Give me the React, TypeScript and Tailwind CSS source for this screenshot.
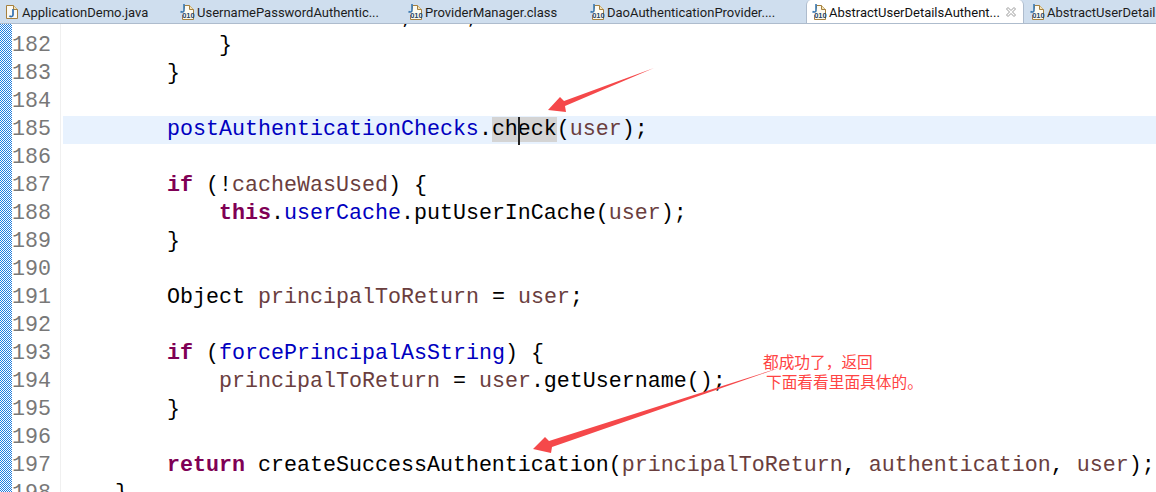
import type { ReactNode } from "react";

function ClassIcon() {
    return (
        <svg width="17" height="18" viewBox="0 0 17 18" className="shrink-0">
            <path d="M5.5 5.5V2.5h5l4 4v10h-11V12" fill="#fdfaf0" stroke="#a5803f" />
            <path d="M10.5 2.5v4h4" fill="#f3e4b8" stroke="#a5803f" />
            <path d="M5 1v6.5c0 1.5-2 2-3.5 1" fill="none" stroke="#3a78b0" strokeWidth="1.6" />
            <text x="3.2" y="15" fontSize="7.5" fontWeight="700" fontFamily="Liberation Sans, sans-serif" fill="#27466b">
                010
            </text>
        </svg>
    );
}

function JavaIcon() {
    return (
        <svg width="14" height="16" viewBox="0 0 14 16" className="shrink-0">
            <path d="M1.5 1.5h7l4 4v9h-11z" fill="#fbf9f2" stroke="#a5803f" />
            <path d="M8.5 1.5v4h4" fill="#f3e4b8" stroke="#a5803f" />
            <path d="M8 5v6c0 1.8-2.6 2-3.6.8" fill="none" stroke="#2f6fb0" strokeWidth="1.7" />
        </svg>
    );
}

function Tab({ name, w, java, active }: { name: string; w: string; java?: boolean; active?: boolean }) {
    return (
        <div
            className={
                active
                    ? `${w} h-6 shrink-0 flex items-center gap-[1px] pl-[4px] bg-white rounded-t-[5px] border-x border-[#aebccd] text-[#111]`
                    : `${w} h-[23px] shrink-0 flex items-center gap-[1px] pl-[5px] text-[#1c1c1c]`
            }
        >
            {java ? <JavaIcon /> : <ClassIcon />}
            <span className={java ? "ml-[2px] mt-[2px] whitespace-nowrap" : "mt-[2px] whitespace-nowrap"}>{name}</span>
            {active && (
                <svg width="12" height="12" viewBox="0 0 12 12" className="ml-auto mr-[6px]" fill="none" stroke="#9a9a9a">
                    <path d="M1.5 3 3 1.5 6 4.5 9 1.5 10.5 3 7.5 6 10.5 9 9 10.5 6 7.5 3 10.5 1.5 9 4.5 6z" />
                </svg>
            )}
        </div>
    );
}

// 1px checker of the overview ruler
function Ruler() {
    return (
        <svg width="12" height="28" className="shrink-0" shapeRendering="crispEdges">
            <defs>
                <pattern id="checker" width="2" height="2" patternUnits="userSpaceOnUse">
                    <rect width="2" height="2" fill="#ffffff" />
                    <rect width="1" height="1" fill="#1f7fe0" />
                    <rect x="1" y="1" width="1" height="1" fill="#1f7fe0" />
                </pattern>
            </defs>
            <rect width="12" height="28" fill="url(#checker)" />
        </svg>
    );
}

const kw = "font-bold text-[#7f0055]";
const field = "text-[#0000c0]";
const local = "text-[#6a3e3e]";

const K = ({ children }: { children: ReactNode }) => <span className={kw}>{children}</span>;
const F = ({ children }: { children: ReactNode }) => <span className={field}>{children}</span>;
const L = ({ children }: { children: ReactNode }) => <span className={local}>{children}</span>;

const lines: { n: number; code?: ReactNode; current?: boolean }[] = [
    { n: 181, code: "                          ,    ;" },
    { n: 182, code: "            }" },
    { n: 183, code: "        }" },
    { n: 184 },
    {
        n: 185,
        current: true,
        code: (
            <>
                {"        "}
                <F>postAuthenticationChecks</F>.
                <span className="relative bg-[#d4d4d4]">
                    check
                    <span className="absolute left-[26px] top-0 h-[28px] w-[2px] bg-[#222]" />
                </span>
                (<L>user</L>);
            </>
        ),
    },
    { n: 186 },
    {
        n: 187,
        code: (
            <>
                {"        "}
                <K>if</K> (!<L>cacheWasUsed</L>) {"{"}
            </>
        ),
    },
    {
        n: 188,
        code: (
            <>
                {"            "}
                <K>this</K>.<F>userCache</F>.putUserInCache(<L>user</L>);
            </>
        ),
    },
    { n: 189, code: "        }" },
    { n: 190 },
    {
        n: 191,
        code: (
            <>
                {"        "}Object <L>principalToReturn</L> = <L>user</L>;
            </>
        ),
    },
    { n: 192 },
    {
        n: 193,
        code: (
            <>
                {"        "}
                <K>if</K> (<F>forcePrincipalAsString</F>) {"{"}
            </>
        ),
    },
    {
        n: 194,
        code: (
            <>
                {"            "}
                <L>principalToReturn</L> = <L>user</L>.getUsername();
            </>
        ),
    },
    { n: 195, code: "        }" },
    { n: 196 },
    {
        n: 197,
        code: (
            <>
                {"        "}
                <K>return</K> createSuccessAuthentication(<L>principalToReturn</L>, <L>authentication</L>, <L>user</L>);
            </>
        ),
    },
    { n: 198, code: "    }" },
];

export default function App() {
    return (
        <div className="relative w-[1156px] h-[492px] overflow-hidden bg-white flex flex-col">
            {/* Tab bar */}
            <div className="relative z-10 h-6 shrink-0 flex bg-[#cfdeee] border-b border-[#aebccd] overflow-hidden text-[13px] font-['Roboto','Liberation_Sans',sans-serif]">
                <Tab name="ApplicationDemo.java" w="w-[174px]" java />
                <Tab name="UsernamePasswordAuthentic..." w="w-[228px]" />
                <Tab name="ProviderManager.class" w="w-[182px]" />
                <Tab name="DaoAuthenticationProvider...." w="w-[222px]" />
                <Tab name="AbstractUserDetailsAuthent..." w="w-[218px]" active />
                <Tab name="AbstractUserDetail" w="w-[140px]" />
            </div>

            {/* Editor */}
            <div className="flex-1 min-h-0 overflow-hidden">
                <div className="-mt-5 font-['Liberation_Mono',monospace] text-[21.67px] leading-[28px]">
                    {lines.map((line) => (
                        <div key={line.n} className="flex h-7">
                            <Ruler />
                            <div className="w-[49px] shrink-0 text-[#787878] border-r border-[#f0f0f0]">{line.n}</div>
                            <div className={`ml-[2px] flex-1 whitespace-pre text-black ${line.current ? "bg-[#e8f2fe]" : ""}`}>
                                {line.code}
                            </div>
                        </div>
                    ))}
                </div>
            </div>

            {/* Annotation arrows */}
            <svg className="absolute inset-0 pointer-events-none" width="1156" height="492" fill="#f5484a">
                <polygon points="654,68 564,101 560,97 548,110 566,112 565,106" />
                <polygon points="782,367 549,441 545,437 533,449 551,453 552,447" />
            </svg>

            {/* Annotation text */}
            <div className="absolute left-[763px] top-[352px] text-[15.7px] leading-5 text-[#ff4444] font-['Noto_Sans_CJK_SC',sans-serif] font-normal">
                <div>都成功了，返回</div>
                <div className="ml-[3px]">下面看看里面具体的。</div>
            </div>
        </div>
    );
}
